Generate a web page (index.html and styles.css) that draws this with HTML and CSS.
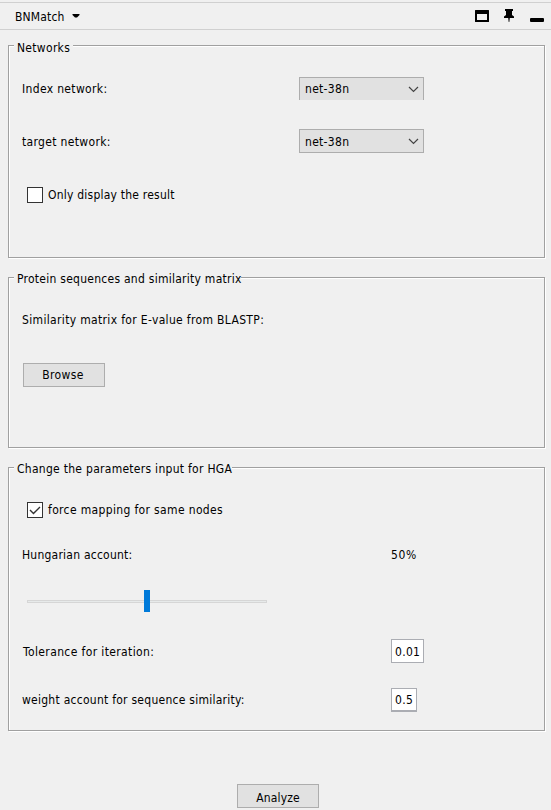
FILE: index.html
```html
<!DOCTYPE html>
<html lang="en">
<head>
<meta charset="utf-8">
<title>BNMatch</title>
<link rel="stylesheet" href="styles.css">
</head>
<body>
<header class="titlebar">
  <span class="t-title">BNMatch</span>
  <svg class="caret" width="8" height="4" viewBox="0 0 8 4"><path d="M.5 0h7v1L5 3.5H3L.5 1z"/></svg>
  <svg class="tools" width="72" height="16" viewBox="0 0 72 16">
    <path fill-rule="evenodd" d="M1.5 2h13q.5 0 .5.5v11q0 .5-.5.5h-13q-.5 0-.5-.5v-11q0-.5.5-.5zM3 6v6h10V6z"/>
    <path d="M31 1h8v2h-1v4l2 1.500v1.500h-4.200L35.300 14h-.6l-.5-4H30V8.500L32 7V3h-1z"/>
    <rect x="56" y="10" width="14" height="4" rx="1"/>
  </svg>
</header>
<main>
  <section class="group networks">
    <h2 class="legend t-net">Networks</h2>
    <div class="row r-index"><label class="t-index">Index network:</label>
      <div class="select clipped"><span class="t-sel">net-38n</span><svg width="11" height="7" viewBox="0 0 11 7"><path d="M1 1l4.500 4.500L10 1"/></svg></div></div>
    <div class="row r-target"><label class="t-target">target network:</label>
      <div class="select"><span class="t-sel">net-38n</span><svg width="11" height="7" viewBox="0 0 11 7"><path d="M1 1l4.500 4.500L10 1"/></svg></div></div>
    <div class="row check"><span class="box"></span><label class="t-only">Only display the result</label></div>
  </section>
  <section class="group protein">
    <h2 class="legend t-protein">Protein sequences and similarity matrix</h2>
    <div class="row r-matrix"><label class="t-matrix">Similarity matrix for E-value from BLASTP:</label></div>
    <button class="button"><span class="t-browse">Browse</span></button>
  </section>
  <section class="group params">
    <h2 class="legend t-params">Change the parameters input for HGA</h2>
    <div class="row check"><span class="box"><svg width="14" height="14" viewBox="0 0 14 14"><path d="M2 7l3.500 3.500L12 4"/></svg></span><label class="t-force">force mapping for same nodes</label></div>
    <div class="row r-hung"><label class="t-hung">Hungarian account:</label><span class="t-pct">50%</span></div>
    <div class="slider"><div class="track"></div><div class="thumb"></div></div>
    <div class="row r-tol"><label class="t-tol">Tolerance for iteration:</label><div class="field"><span class="t-f1">0.01</span></div></div>
    <div class="row r-weight"><label class="t-weight">weight account for sequence similarity:</label><div class="field short"><span class="t-f2">0.5</span></div></div>
  </section>
</main>
<button class="button analyze"><span class="t-analyze">Analyze</span></button>
</body>
</html>
```
FILE: styles.css
```css
* { box-sizing: border-box; }
body {
  margin: 0;
  height: 810px;
  overflow: hidden;
  background: #f0f0f0;
  color: #000;
  font: 12px/24px "DejaVu Sans Condensed", "DejaVu Sans", sans-serif;
  font-stretch: condensed;
  letter-spacing: .3px;
  white-space: nowrap;
}
.titlebar {
  display: flex;
  align-items: center;
  height: 28px;
  margin-top: 2px;
  padding-left: 15px;
  border-top: 1px solid #d0d0d0;
  border-bottom: 1px solid #d0d0d0;
}
.t-title { width: 57px; padding-top: 2px; letter-spacing: .15px; }
.tools { margin-left: 394px; }
main { padding: 15px 6px 0 8px; }
.group {
  display: flex;
  flex-direction: column;
  align-items: flex-start;
  border: 1px solid #a0a0a0;
  box-shadow: 1px 1px 0 #fff, inset 1px 1px 0 #fff;
}
.networks { height: 213px; }
.protein { height: 171px; margin-top: 19px; }
.params { height: 264px; margin-top: 19px; }
.legend {
  height: 20px;
  margin: -7px 0 0 5px;
  padding: 0 0 0 3px;
  background: #f0f0f0;
  font-size: 12px;
  font-weight: normal;
  line-height: 16px;
}
.t-net { width: 59px; line-height: 18px; }
.t-protein { width: 227px; letter-spacing: .26px; }
.t-params { width: 218px; letter-spacing: .28px; }
.row { display: flex; align-items: center; height: 24px; }
.row > label:first-child { width: 277px; margin-left: 13px; }
.r-index { margin-top: 18px; }
.r-target { margin-top: 28px; }
.r-target label, .r-target .t-sel { padding-top: 2px; }
.t-index, .t-target, .t-matrix { letter-spacing: .34px; }
.networks .check { margin-top: 30px; }
.check { padding-left: 18px; }
.check label { margin-left: 5px; }
.t-only { letter-spacing: .22px; }
.t-force { letter-spacing: .35px; }
.box {
  width: 16px;
  height: 16px;
  border: 1px solid #333;
  background: #fff;
}
.box svg { display: block; fill: none; stroke: #333; stroke-width: 1.4; }
.select {
  display: flex;
  align-items: center;
  justify-content: space-between;
  width: 125px;
  height: 24px;
  padding: 0 4px 0 5px;
  border: 1px solid #adadad;
  background: #e1e1e1;
}
.clipped { height: 23px; margin-bottom: 1px; border-bottom: 0; }
.select svg { fill: none; stroke: #444; stroke-width: 1.2; }
.r-matrix { margin-top: 17px; }
.button {
  width: 82px;
  height: 24px;
  padding: 0;
  border: 1px solid #adadad;
  background: #e1e1e1;
  color: #000;
  font: inherit;
  letter-spacing: .33px;
  line-height: 22px;
}
.t-browse { margin-right: 2px; }
.protein .button { margin: 31px 0 0 14px; }
.params .check { margin-top: 17px; }
.r-hung { margin-top: 21px; }
.t-hung { letter-spacing: .23px; }
.t-pct { letter-spacing: .6px; }
.row.r-hung > label, .row.r-tol > label, .row.r-weight > label { width: 369px; }
.slider {
  display: grid;
  align-items: center;
  justify-items: center;
  width: 240px;
  height: 22px;
  margin: 23px 0 0 18px;
}
.track, .thumb { grid-area: 1 / 1; }
.track { width: 240px; height: 3px; border: 1px solid #d6d6d6; background: #e7eaea; }
.thumb { width: 6px; height: 22px; background: #007ad9; }
.r-tol { margin-top: 27px; }
.row > .t-tol { padding: 2px 0 0 1px; letter-spacing: .38px; }
.r-weight { margin-top: 25px; }
.t-weight { letter-spacing: .26px; }
.field {
  width: 33px;
  height: 24px;
  padding-left: 3px;
  border: 1px solid #abadb3;
  background: #fff;
  line-height: 24px;
}
.short { width: 26px; border-bottom-width: 2px; line-height: 23px; }
.analyze { display: block; margin: 53px 0 0 237px; padding-top: 2px; letter-spacing: .15px; }
```
